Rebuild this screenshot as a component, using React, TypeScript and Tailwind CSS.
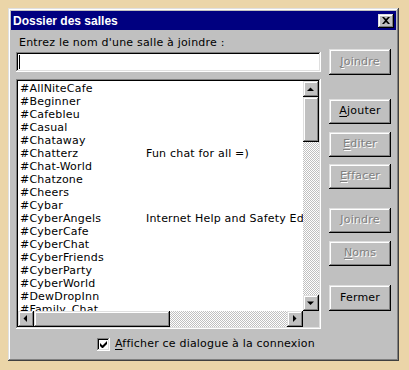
import React from "react";

const raised =
  "bg-[#c0c0c0] shadow-[inset_-1px_-1px_#000,inset_1px_1px_#dfdfdf,inset_-2px_-2px_#808080,inset_2px_2px_#fff]";
const sunken =
  "shadow-[inset_-1px_-1px_#fff,inset_1px_1px_#808080,inset_-2px_-2px_#dfdfdf,inset_2px_2px_#000]";
const checker =
  "bg-[image:repeating-conic-gradient(#c0c0c0_0_25%,#ffffff_0_50%)] bg-[length:2px_2px]";

const rooms: [string, string][] = [
  ["#AllNiteCafe", ""],
  ["#Beginner", ""],
  ["#Cafebleu", ""],
  ["#Casual", ""],
  ["#Chataway", ""],
  ["#Chatterz", "Fun chat for all =)"],
  ["#Chat-World", ""],
  ["#Chatzone", ""],
  ["#Cheers", ""],
  ["#Cybar", ""],
  ["#CyberAngels", "Internet Help and Safety Education"],
  ["#CyberCafe", ""],
  ["#CyberChat", ""],
  ["#CyberFriends", ""],
  ["#CyberParty", ""],
  ["#CyberWorld", ""],
  ["#DewDropInn", ""],
  ["#Family_Chat", ""],
];

function Btn({
  label,
  under,
  disabled,
  className = "",
}: {
  label: string;
  under?: number;
  disabled?: boolean;
  className?: string;
}) {
  const chars =
    under === undefined ? (
      label
    ) : (
      <>
        {label.slice(0, under)}
        <span className="underline underline-offset-2">{label[under]}</span>
        {label.slice(under + 1)}
      </>
    );
  return (
    <div
      className={`${raised} w-[62px] flex items-center justify-center ${
        disabled ? "text-[#808080] [text-shadow:1px_1px_0_#fff]" : "text-black"
      } ${className}`}
    >
      {chars}
    </div>
  );
}

function Arrow({ dir }: { dir: "up" | "down" | "left" | "right" }) {
  const pts = {
    up: "4,10 11,10 7.5,6.5",
    down: "4,6.5 11,6.5 7.5,10",
    left: "9,4 9,11 5.5,7.5",
    right: "6,4 6,11 9.5,7.5",
  }[dir];
  return (
    <div className={`${raised} w-[16px] h-[16px] shrink-0`}>
      <svg width="16" height="16" viewBox="0 0 16 16">
        <polygon points={pts} fill="#000" />
      </svg>
    </div>
  );
}

export default function App() {
  return (
    <div className="w-[409px] h-[370px] bg-[#ebd5a8] pt-[8px] pl-[8px] font-['DejaVu_Sans',sans-serif] text-[11px] tracking-[0.2px]">
      <div className="w-[391px] h-[353px] p-[3px] bg-[#c0c0c0] shadow-[inset_-1px_-1px_#404040,inset_1px_1px_#dfdfdf,inset_-2px_-2px_#808080,inset_2px_2px_#fff] flex flex-col">
        {/* barre de titre */}
        <div className="h-[19px] bg-[#000080] flex items-center justify-between pl-[2px] pr-[2px]">
          <span className="text-white font-bold text-[12px] tracking-normal font-['Liberation_Sans',sans-serif]">
            Dossier des salles
          </span>
          <div className={`${raised} w-[16px] h-[14px] flex items-center justify-center`}>
            <svg width="8" height="7" viewBox="0 0 8 7">
              <path d="M0 0h2l2 2 2-2h2L5 3.5 8 7H6L4 5 2 7H0l3-3.5z" fill="#000" />
            </svg>
          </div>
        </div>

        <div className="pl-[5px] pr-[5px]">
          <div className="pt-[7px] pl-[3px] leading-[12px] h-[19px]">
            Entrez le nom d'une salle à joindre :
          </div>

          <div className="flex items-center h-[26px]">
            <div className={`${sunken} bg-white w-[305px] h-[20px] flex items-center pl-[3px]`}>
              <div className="w-[1px] h-[14px] bg-black" />
            </div>
            <Btn label="Joindre" under={0} disabled className="ml-[8px] h-[26px]" />
          </div>

          <div className="flex mt-[4px]">
            <div className={`${sunken} bg-white w-[305px] h-[250px] p-[2px] flex flex-col`}>
              <div className="flex h-[230px]">
                <div className="w-[285px] h-[230px] overflow-hidden pt-[1px] pl-[2px]">
                  {rooms.map(([n, d]) => (
                    <div key={n} className="flex h-[13px] leading-[13px] whitespace-nowrap overflow-hidden">
                      <span className="w-[126px] shrink-0 overflow-hidden">{n}</span>
                      <span className="w-[157px] shrink-0 overflow-hidden">{d}</span>
                    </div>
                  ))}
                </div>
                <div className="w-[16px] flex flex-col">
                  <Arrow dir="up" />
                  <div className={`${raised} h-[45px] shrink-0`} />
                  <div className={`${checker} flex-1`} />
                  <Arrow dir="down" />
                </div>
              </div>
              <div className="flex h-[16px]">
                <Arrow dir="left" />
                <div className={`${raised} w-[136px] shrink-0`} />
                <div className={`${checker} flex-1`} />
                <Arrow dir="right" />
                <div className="w-[16px] bg-[#c0c0c0]" />
              </div>
            </div>

            <div className="ml-[8px] flex flex-col">
              <Btn label="Ajouter" under={0} className="mt-[20px] h-[25px]" />
              <Btn label="Editer" under={0} disabled className="mt-[8px] h-[25px]" />
              <Btn label="Effacer" under={0} disabled className="mt-[7px] h-[25px]" />
              <Btn label="Joindre" disabled className="mt-[19px] h-[25px]" />
              <Btn label="Noms" under={0} disabled className="mt-[8px] h-[25px]" />
              <Btn label="Fermer" className="mt-[19px] h-[26px]" />
            </div>
          </div>

          <div className="flex items-center h-[16px] mt-[7px] ml-[81px]">
            <div className={`${sunken} bg-white w-[13px] h-[13px] flex items-center justify-center`}>
              <svg width="7" height="7" viewBox="0 0 7 7">
                <path d="M0 2v3l2 2h1l4-4V0L2.5 4.5z" fill="#000" />
              </svg>
            </div>
            <span className="ml-[5px]">
              <span className="underline underline-offset-2">A</span>fficher ce dialogue à la connexion
            </span>
          </div>
        </div>
      </div>
    </div>
  );
}
